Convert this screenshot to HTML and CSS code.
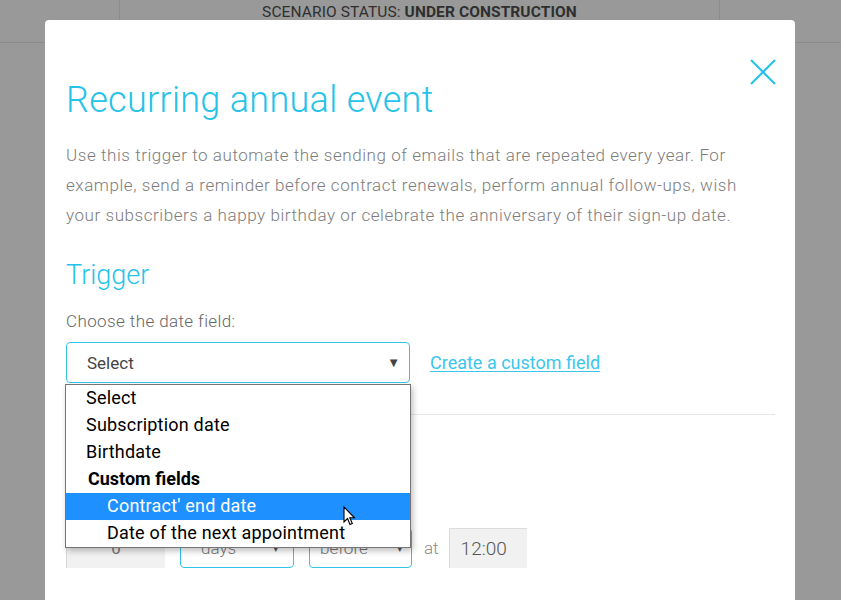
FILE: index.html
```html
<!DOCTYPE html>
<html>
<head>
<meta charset="utf-8">
<link rel="stylesheet" href="styles.css">
</head>
<body>
<header class="topbar">
  <div class="tb-side"></div>
  <div class="tb-center">SCENARIO STATUS: <b>UNDER CONSTRUCTION</b></div>
  <div class="tb-side"></div>
</header>

<div class="modal">
  <button class="close" aria-label="Close">
    <svg width="28" height="28" viewBox="0 0 28 28"><path d="M2 2 L26 26 M26 2 L2 26" stroke="#25c3e9" stroke-width="2.2" fill="none"/></svg>
  </button>
  <h1 class="title">Recurring annual event</h1>
  <p class="desc">Use this trigger to automate the sending of emails that are repeated every year. For example, send a reminder before contract renewals, perform annual follow-ups, wish your subscribers a happy birthday or celebrate the anniversary of their sign-up date.</p>
  <h2 class="subtitle">Trigger</h2>
  <div class="label">Choose the date field:</div>
  <div class="field-row">
    <div class="select-wrap">
      <div class="select">
        <span>Select</span>
        <span class="arrow">&#9660;</span>
      </div>
      <ul class="dropdown">
        <li class="opt">Select</li>
        <li class="opt">Subscription date</li>
        <li class="opt">Birthdate</li>
        <li class="group">Custom fields</li>
        <li class="opt sub active">Contract' end date
          <svg class="cursor" width="14" height="22" viewBox="0 0 14 22"><path d="M1 1 L1 16 L4.5 12.5 L7 18.5 L9.3 17.5 L6.8 11.8 L11.5 11.8 Z" fill="#fff" stroke="#000" stroke-width="1.1" stroke-linejoin="miter"/></svg>
        </li>
        <li class="opt sub">Date of the next appointment</li>
      </ul>
    </div>
    <a class="link" href="#">Create a custom field</a>
  </div>
  <hr class="sep">
  <div class="section2">
    <div class="timing">
      <div class="num">0</div>
      <div class="mini-select days"><span>days</span><span class="tri">&#9662;</span></div>
      <div class="mini-select before"><span>before</span><span class="tri">&#9662;</span></div>
      <span class="at">at</span>
      <div class="time">12:00</div>
    </div>
  </div>
</div>
</body>
</html>
```

FILE: styles.css
```css
* { box-sizing: border-box; }
html, body {
  margin: 0;
  padding: 0;
  height: 100%;
  overflow: hidden;
}
body {
  background: #999999;
  font-family: Roboto, "Noto Sans", sans-serif;
  position: relative;
}
.topbar {
  display: flex;
  height: 43px;
  border-bottom: 1px solid #8c8c8c;
  background: #999999;
}
.tb-side {
  width: 120px;
  flex: 0 0 auto;
}
.tb-side:first-child { border-right: 1px solid #8c8c8c; }
.tb-side:last-child { width: 122px; border-left: 1px solid #8c8c8c; }
.tb-center {
  flex: 1;
  text-align: center;
  font-size: 15.5px;
  line-height: 24px;
  color: #2f2f2f;
  letter-spacing: 0.1px;
}
.tb-center b { font-weight: 700; }

.modal {
  position: absolute;
  top: 20px;
  left: 45px;
  width: 750px;
  height: 620px;
  background: #fff;
  border-radius: 4px;
  padding: 58px 20px 0 21px;
}
.close {
  position: absolute;
  top: 38px;
  right: 18px;
  border: 0;
  background: none;
  padding: 0;
  width: 28px;
  height: 28px;
  cursor: pointer;
}
.close svg { display: block; }
.title {
  margin: 0;
  font-size: 36px;
  line-height: 44px;
  font-weight: 300;
  color: #25c3e9;
  letter-spacing: 0.3px;
}
.desc {
  margin: 18px 0 0;
  font-size: 17px;
  line-height: 30px;
  font-weight: 300;
  letter-spacing: 0.56px;
  color: #7d7d7d;
}
.subtitle {
  margin: 29px 0 0;
  font-size: 27px;
  line-height: 32px;
  font-weight: 300;
  color: #25c3e9;
}
.label {
  margin-top: 20px;
  font-size: 17px;
  line-height: 20px;
  font-weight: 300;
  letter-spacing: 0.4px;
  color: #666;
}
.field-row {
  margin-top: 11px;
  display: flex;
  align-items: center;
}
.select-wrap {
  position: relative;
  width: 344px;
}
.select {
  height: 41px;
  border: 1px solid #33c3e8;
  border-radius: 4px;
  display: flex;
  align-items: center;
  justify-content: space-between;
  padding: 0 9px 0 20px;
  font-size: 17px;
  color: #444;
}
.arrow {
  font-size: 13px;
  color: #444;
}
.dropdown {
  position: absolute;
  top: 42px;
  left: -1px;
  width: 346px;
  margin: 0;
  padding: 0;
  list-style: none;
  background: #fff;
  border: 1px solid #767676;
  box-shadow: 2px 3px 6px rgba(0,0,0,0.25);
  z-index: 5;
}
.dropdown li {
  height: 27px;
  line-height: 26px;
  font-size: 18px;
  letter-spacing: 0.2px;
  color: #000;
  padding-left: 20px;
  white-space: nowrap;
  position: relative;
}
.dropdown .group {
  font-weight: 700;
  padding-left: 22px;
  letter-spacing: 0;
}
.dropdown .sub { padding-left: 41px; }
.dropdown .active {
  background: #1e90ff;
  color: #fff;
}
.cursor {
  position: absolute;
  left: 277px;
  top: 13px;
}
.link {
  margin-left: 20px;
  font-size: 18px;
  color: #3cc6ec;
  text-decoration: underline;
  text-underline-offset: 2px;
}
.sep {
  margin: 31px 0 0;
  border: 0;
  border-top: 1px solid #e8e8e8;
  height: 0;
}
.section2 {
  padding-top: 113px;
}
.timing {
  display: flex;
  align-items: center;
  height: 40px;
}
.num {
  width: 99px;
  height: 40px;
  background: #f1f1f1;
  border-left: 1px solid #d8d8d8;
  text-align: center;
  line-height: 40px;
  font-size: 17px;
  color: #777;
}
.mini-select {
  height: 40px;
  border: 1px solid #33c3e8;
  border-radius: 4px;
  display: flex;
  align-items: center;
  justify-content: space-between;
  padding: 0 14px 0 20px;
  font-size: 17px;
  font-weight: 300;
  color: #777;
}
.mini-select .tri { font-size: 11px; color: #555; }
.days { width: 114px; margin-left: 15px; }
.before { width: 103px; margin-left: 15px; padding-left: 10px; padding-right: 8px; }
.at {
  margin-left: 12px;
  font-size: 17px;
  font-weight: 300;
  color: #888;
}
.time {
  margin-left: 10px;
  width: 78px;
  height: 40px;
  background: #f1f1f1;
  border: 1px solid #dcdcdc;
  border-right: 0;
  border-bottom: 0;
  line-height: 40px;
  padding-left: 11px;
  font-size: 19px;
  font-weight: 300;
  color: #555;
}
```
